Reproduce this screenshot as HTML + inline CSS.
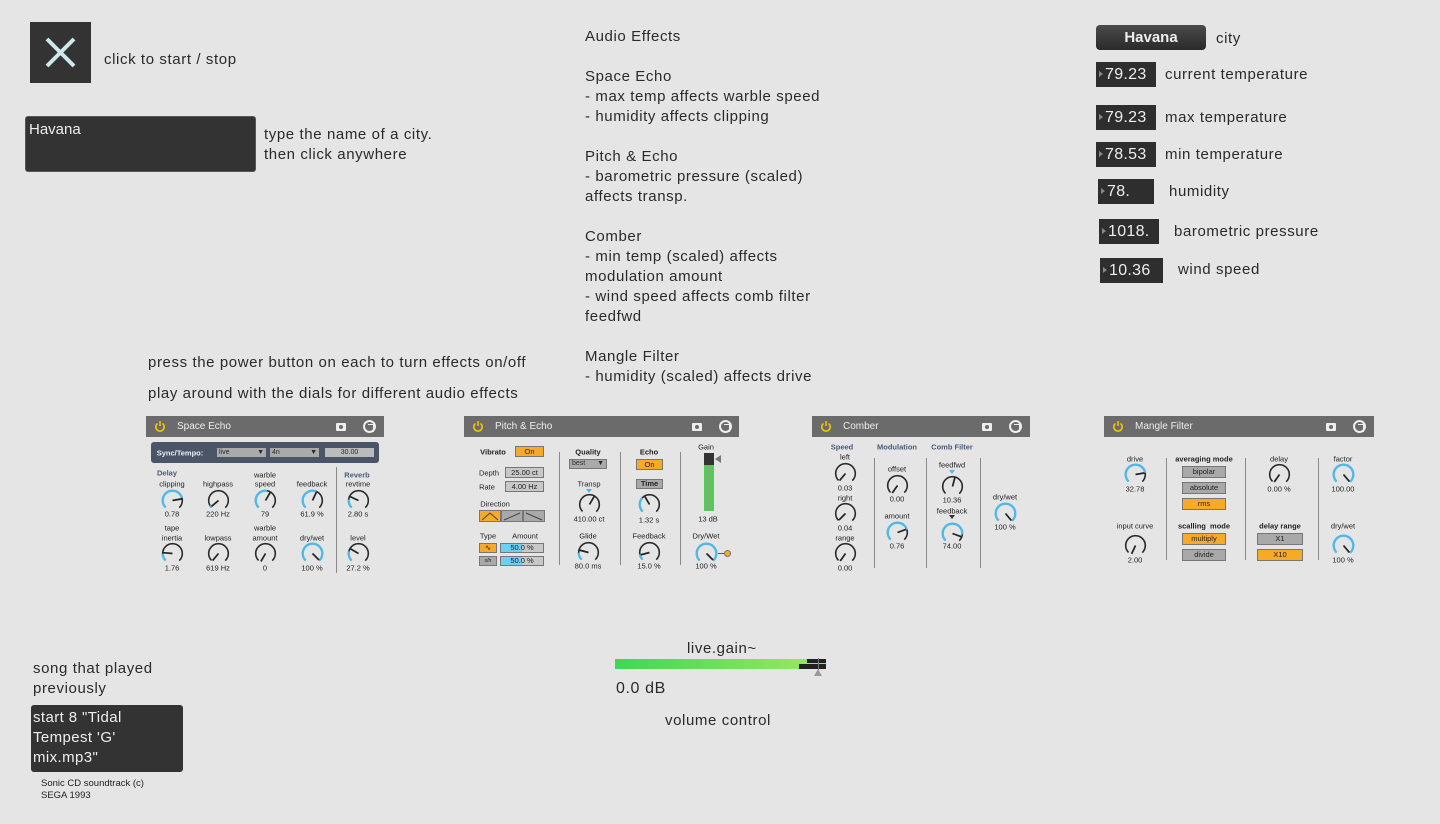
<!DOCTYPE html>
<html><head><meta charset="utf-8"><style>
*{margin:0;padding:0;box-sizing:border-box}
body{width:1440px;height:824px;background:#e5e5e5;position:relative;overflow:hidden;font-family:"Liberation Sans",sans-serif;color:#2a2a2a}
.a{position:absolute;white-space:nowrap}
.t{font-size:15px;line-height:20px;letter-spacing:0.6px}
.c{position:absolute;transform:translate(-50%,-50%);white-space:nowrap;font-size:7.5px;color:#222;line-height:9px}
.h{color:#4a5a7a;font-weight:bold}
.b{font-weight:bold}
.num{position:absolute;background:#2e2e2e;color:#eee;font-size:16px;line-height:25px;height:25px;padding-left:9px;letter-spacing:0.3px}
.num:before{content:"";position:absolute;left:3px;top:9px;border-left:4px solid #888;border-top:3.5px solid transparent;border-bottom:3.5px solid transparent}
.bar{position:absolute;height:21px;background:#6b6b6b;color:#eee;font-size:10px;line-height:21px}
.bar .p{position:absolute;left:8px;top:4px}
.bar .n{position:absolute;left:31px}
.bar .cam{position:absolute;top:7px;width:10px;height:8px;background:#eee;border-radius:1px}
.bar .cam:after{content:"";position:absolute;left:3px;top:2px;width:4px;height:4px;border-radius:50%;background:#6b6b6b}
.bar .cir{position:absolute;top:4px;width:13px;height:13px;border-radius:50%;border:2px solid #eee}
.bar .cir:after{content:"";position:absolute;left:3px;top:2px;width:5px;height:6px;border:1.5px solid #eee;border-left:none}
.k{position:absolute;width:27px;height:27px;margin:-13.5px 0 0 -13.5px;overflow:visible}
.k circle{fill:none;transform:rotate(135deg)}
.k .tr{stroke:#2a2a2a;stroke-width:1.3;stroke-dasharray:37.7 99}
.k .bl{stroke:#4fb8e8;stroke-width:1.9}
.k line{stroke:#222;stroke-width:1.4}
.btn{position:absolute;font-size:7.5px;text-align:center;border:1px solid #777;color:#222}
.o{background:#f7a928}
.g{background:#a9a9a9}
.dv{position:absolute;width:1px;background:#8a8a8a}
</style></head><body>

<div class="a" style="left:30px;top:22px;width:61px;height:61px;background:#333">
<svg width="61" height="61"><path d="M17 17L44 44M44 17L17 44" stroke="#cde8ea" stroke-width="4"/></svg></div>
<div class="a t" style="left:104px;top:50px">click to start / stop</div>
<div class="a" style="left:25px;top:116px;width:231px;height:56px;background:#333;border-radius:3px;border:1px solid #555;color:#eee;font-size:15px;padding:4px 3px">Havana</div>
<div class="a t" style="left:264px;top:125px">type the name of a city.<br>then click anywhere</div>

<div class="a t" style="left:585px;top:27px">Audio Effects<br><br>Space Echo<br>- max temp affects warble speed<br>- humidity affects clipping<br><br>Pitch &amp; Echo<br>- barometric pressure (scaled)<br>affects transp.<br><br>Comber<br>- min temp (scaled) affects<br>modulation amount<br>- wind speed affects comb filter<br>feedfwd<br><br>Mangle Filter<br>- humidity (scaled) affects drive</div>

<div class="a t" style="left:148px;top:353px">press the power button on each to turn effects on/off</div>
<div class="a t" style="left:148px;top:384px">play around with the dials for different audio effects</div>

<div class="a" style="left:1096px;top:25px;width:110px;height:25px;border-radius:4px;background:linear-gradient(#4a4a4a,#2a2a2a);color:#eee;font-weight:bold;font-size:15px;text-align:center;line-height:25px">Havana</div>
<div class="a t" style="left:1216px;top:29px">city</div>
<div class="num" style="left:1096px;top:62px;width:60px">79.23</div><div class="a t" style="left:1165px;top:65px">current temperature</div>
<div class="num" style="left:1096px;top:105px;width:60px">79.23</div><div class="a t" style="left:1165px;top:108px">max temperature</div>
<div class="num" style="left:1096px;top:142px;width:60px">78.53</div><div class="a t" style="left:1165px;top:145px">min temperature</div>
<div class="num" style="left:1098px;top:179px;width:56px">78.</div><div class="a t" style="left:1169px;top:182px">humidity</div>
<div class="num" style="left:1099px;top:219px;width:60px">1018.</div><div class="a t" style="left:1174px;top:222px">barometric pressure</div>
<div class="num" style="left:1100px;top:258px;width:63px">10.36</div><div class="a t" style="left:1178px;top:260px">wind speed</div>

<!-- bars -->
<div class="bar" style="left:146px;top:416px;width:238px"><svg class="p" width="12" height="12" viewBox="0 0 12 12"><path d="M3.5 3.5A4.2 4.2 0 1 0 8.5 3.5M6 1v5" fill="none" stroke="#f2c400" stroke-width="1.6"/></svg><span class="n">Space Echo</span><div class="cam" style="left:190px"></div><div class="cir" style="left:217px"></div></div>
<div class="bar" style="left:464px;top:416px;width:275px"><svg class="p" width="12" height="12" viewBox="0 0 12 12"><path d="M3.5 3.5A4.2 4.2 0 1 0 8.5 3.5M6 1v5" fill="none" stroke="#f2c400" stroke-width="1.6"/></svg><span class="n">Pitch &amp; Echo</span><div class="cam" style="left:228px"></div><div class="cir" style="left:255px"></div></div>
<div class="bar" style="left:812px;top:416px;width:218px"><svg class="p" width="12" height="12" viewBox="0 0 12 12"><path d="M3.5 3.5A4.2 4.2 0 1 0 8.5 3.5M6 1v5" fill="none" stroke="#f2c400" stroke-width="1.6"/></svg><span class="n">Comber</span><div class="cam" style="left:170px"></div><div class="cir" style="left:197px"></div></div>
<div class="bar" style="left:1104px;top:416px;width:270px"><svg class="p" width="12" height="12" viewBox="0 0 12 12"><path d="M3.5 3.5A4.2 4.2 0 1 0 8.5 3.5M6 1v5" fill="none" stroke="#f2c400" stroke-width="1.6"/></svg><span class="n">Mangle Filter</span><div class="cam" style="left:222px"></div><div class="cir" style="left:249px"></div></div>

<!-- Space Echo -->
<div class="a" style="left:151px;top:442px;width:228px;height:21px;background:#4b5568;border-radius:3px"></div>
<div class="c b" style="left:180px;top:453px;color:#eee">Sync/Tempo:</div>
<div class="a" style="left:217px;top:448px;width:49px;height:9px;background:#aaa;font-size:7px;line-height:9px;padding-left:2px">live<span style="position:absolute;right:2px">▼</span></div>
<div class="a" style="left:270px;top:448px;width:49px;height:9px;background:#aaa;font-size:7px;line-height:9px;padding-left:2px">4n<span style="position:absolute;right:2px">▼</span></div>
<div class="a" style="left:325px;top:448px;width:49px;height:9px;background:#bbb;font-size:7px;line-height:9px;text-align:center">30.00</div>
<div class="c h" style="left:167px;top:473px">Delay</div>
<div class="c" style="left:172px;top:484px">clipping</div>
<div class="c" style="left:218px;top:484px">highpass</div>
<div class="c" style="left:265px;top:475px">warble</div><div class="c" style="left:265px;top:484px">speed</div>
<div class="c" style="left:312px;top:484px">feedback</div>
<div class="c h" style="left:357px;top:475px">Reverb</div><div class="c" style="left:358px;top:484px">revtime</div>
<svg class="k" style="left:172px;top:500px" viewBox="-11 -11 22 22"><circle r="8" class="tr"/><circle r="8" class="bl" stroke-dasharray="29 99"/><line x2="7.5" transform="rotate(350)"/></svg>
<svg class="k" style="left:218px;top:500px" viewBox="-11 -11 22 22"><circle r="8" class="tr"/><circle r="8" class="bl" stroke-dasharray="2 99"/><line x2="7.5" transform="rotate(140)"/></svg>
<svg class="k" style="left:265px;top:500px" viewBox="-11 -11 22 22"><circle r="8" class="tr"/><circle r="8" class="bl" stroke-dasharray="20 99"/><line x2="7.5" transform="rotate(300)"/></svg>
<svg class="k" style="left:312px;top:500px" viewBox="-11 -11 22 22"><circle r="8" class="tr"/><circle r="8" class="bl" stroke-dasharray="22 99"/><line x2="7.5" transform="rotate(295)"/></svg>
<svg class="k" style="left:358px;top:500px" viewBox="-11 -11 22 22"><circle r="8" class="tr"/><circle r="8" class="bl" stroke-dasharray="7 99"/><line x2="7.5" transform="rotate(205)"/></svg>
<div class="c" style="left:172px;top:514px">0.78</div><div class="c" style="left:218px;top:514px">220 Hz</div><div class="c" style="left:265px;top:514px">79</div><div class="c" style="left:312px;top:514px">61.9 %</div><div class="c" style="left:358px;top:514px">2.80 s</div>
<div class="c" style="left:172px;top:528px">tape</div><div class="c" style="left:172px;top:538px">inertia</div>
<div class="c" style="left:218px;top:538px">lowpass</div>
<div class="c" style="left:265px;top:528px">warble</div><div class="c" style="left:265px;top:538px">amount</div>
<div class="c" style="left:312px;top:538px">dry/wet</div>
<div class="c" style="left:358px;top:538px">level</div>
<svg class="k" style="left:172px;top:553px" viewBox="-11 -11 22 22"><circle r="8" class="tr"/><circle r="8" class="bl" stroke-dasharray="6 99"/><line x2="7.5" transform="rotate(185)"/></svg>
<svg class="k" style="left:218px;top:553px" viewBox="-11 -11 22 22"><circle r="8" class="tr"/><line x2="7.5" transform="rotate(130)"/></svg>
<svg class="k" style="left:265px;top:553px" viewBox="-11 -11 22 22"><circle r="8" class="tr"/><line x2="7.5" transform="rotate(120)"/></svg>
<svg class="k" style="left:312px;top:553px" viewBox="-11 -11 22 22"><circle r="8" class="tr"/><circle r="8" class="bl" stroke-dasharray="37.7 99"/><line x2="7.5" transform="rotate(45)"/></svg>
<svg class="k" style="left:358px;top:553px" viewBox="-11 -11 22 22"><circle r="8" class="tr"/><circle r="8" class="bl" stroke-dasharray="8 99"/><line x2="7.5" transform="rotate(210)"/></svg>
<div class="c" style="left:172px;top:568px">1.76</div><div class="c" style="left:218px;top:568px">619 Hz</div><div class="c" style="left:265px;top:568px">0</div><div class="c" style="left:312px;top:568px">100 %</div><div class="c" style="left:358px;top:568px">27.2 %</div>
<div class="dv" style="left:336px;top:467px;height:106px"></div>

<!-- Pitch & Echo -->
<div class="c b" style="left:493px;top:452px">Vibrato</div>
<div class="btn o" style="left:515px;top:446px;width:29px;height:11px;line-height:9px">On</div>
<div class="c" style="left:489px;top:473px">Depth</div><div class="btn g" style="left:505px;top:467px;width:39px;height:11px;line-height:9px;background:#c8c8c8">25.00 ct</div>
<div class="c" style="left:487px;top:487px">Rate</div><div class="btn g" style="left:505px;top:481px;width:39px;height:11px;line-height:9px;background:#c8c8c8">4.00 Hz</div>
<div class="c" style="left:495px;top:504px">Direction</div>
<div class="btn o" style="left:479px;top:510px;width:22px;height:12px"><svg width="20" height="10"><path d="M2 9L10 2L18 9" fill="none" stroke="#444"/></svg></div>
<div class="btn g" style="left:501px;top:510px;width:22px;height:12px"><svg width="20" height="10"><path d="M2 9L18 2" fill="none" stroke="#444"/></svg></div>
<div class="btn g" style="left:523px;top:510px;width:22px;height:12px"><svg width="20" height="10"><path d="M2 2L18 9" fill="none" stroke="#444"/></svg></div>
<div class="c" style="left:488px;top:536px">Type</div><div class="c" style="left:525px;top:536px">Amount</div>
<div class="btn o" style="left:479px;top:543px;width:18px;height:10px;line-height:8px">∿</div>
<div class="btn g" style="left:479px;top:556px;width:18px;height:10px;line-height:8px;font-size:5px">s/h</div>
<div class="btn" style="left:500px;top:543px;width:44px;height:10px;line-height:8px;background:linear-gradient(90deg,#6cd0f5 50%,#c8c8c8 50%)">50.0 %</div>
<div class="btn" style="left:500px;top:556px;width:44px;height:10px;line-height:8px;background:linear-gradient(90deg,#6cd0f5 50%,#c8c8c8 50%)">50.0 %</div>
<div class="dv" style="left:559px;top:452px;height:113px"></div>
<div class="c b" style="left:588px;top:452px">Quality</div>
<div class="a" style="left:569px;top:459px;width:38px;height:10px;background:#aaa;border:1px solid #777;font-size:7px;line-height:8px;padding-left:2px">best<span style="position:absolute;right:2px">▼</span></div>
<div class="c" style="left:589px;top:484px">Transp</div>
<div class="a" style="left:586px;top:489px;border-top:4px solid #4fb8e8;border-left:3px solid transparent;border-right:3px solid transparent"></div>
<svg class="k" style="left:589px;top:504px" viewBox="-11 -11 22 22"><circle r="8" class="tr"/><line x2="7.5" transform="rotate(300)"/></svg>
<div class="c" style="left:589px;top:519px">410.00 ct</div>
<div class="c" style="left:588px;top:536px">Glide</div>
<svg class="k" style="left:588px;top:552px" viewBox="-11 -11 22 22"><circle r="8" class="tr"/><circle r="8" class="bl" stroke-dasharray="6 99"/><line x2="7.5" transform="rotate(195)"/></svg>
<div class="c" style="left:588px;top:566px">80.0 ms</div>
<div class="dv" style="left:620px;top:452px;height:113px"></div>
<div class="c b" style="left:649px;top:452px">Echo</div>
<div class="btn o" style="left:636px;top:459px;width:27px;height:11px;line-height:9px">On</div>
<div class="btn g" style="left:636px;top:479px;width:27px;height:10px;line-height:8px;font-weight:bold">Time</div>
<svg class="k" style="left:649px;top:504px" viewBox="-11 -11 22 22"><circle r="8" class="tr"/><circle r="8" class="bl" stroke-dasharray="12 99"/><line x2="7.5" transform="rotate(240)"/></svg>
<div class="c" style="left:649px;top:520px">1.32 s</div>
<div class="c" style="left:649px;top:536px">Feedback</div>
<svg class="k" style="left:649px;top:552px" viewBox="-11 -11 22 22"><circle r="8" class="tr"/><circle r="8" class="bl" stroke-dasharray="5 99"/><line x2="7.5" transform="rotate(165)"/></svg>
<div class="c" style="left:649px;top:566px">15.0 %</div>
<div class="dv" style="left:680px;top:452px;height:113px"></div>
<div class="c" style="left:706px;top:447px">Gain</div>
<div class="a" style="left:704px;top:453px;width:10px;height:58px;background:linear-gradient(90deg,#58c858 45%,#999 45%,#999 55%,#58c858 55%)"></div>
<div class="a" style="left:704px;top:453px;width:10px;height:12px;background:#333"></div>
<div class="a" style="left:715px;top:455px;border-right:6px solid #777;border-top:4px solid transparent;border-bottom:4px solid transparent"></div>
<div class="c" style="left:708px;top:519px">13 dB</div>
<div class="c" style="left:706px;top:536px">Dry/Wet</div>
<svg class="k" style="left:706px;top:553px" viewBox="-11 -11 22 22"><circle r="8" class="tr"/><circle r="8" class="bl" stroke-dasharray="37.7 99"/><line x2="7.5" transform="rotate(45)"/></svg>
<div class="a" style="left:718px;top:553px;width:7px;height:1px;background:#555"></div>
<div class="a" style="left:724px;top:550px;width:7px;height:7px;border-radius:50%;background:#f7a928;border:1px solid #777"></div>
<div class="c" style="left:706px;top:566px">100 %</div>

<!-- Comber -->
<div class="c h" style="left:842px;top:447px">Speed</div>
<div class="c" style="left:845px;top:457px">left</div>
<svg class="k" style="left:845px;top:473px" viewBox="-11 -11 22 22"><circle r="8" class="tr"/><line x2="7.5" transform="rotate(130)"/></svg>
<div class="c" style="left:845px;top:488px">0.03</div>
<div class="c" style="left:845px;top:498px">right</div>
<svg class="k" style="left:845px;top:513px" viewBox="-11 -11 22 22"><circle r="8" class="tr"/><line x2="7.5" transform="rotate(135)"/></svg>
<div class="c" style="left:845px;top:528px">0.04</div>
<div class="c" style="left:845px;top:538px">range</div>
<svg class="k" style="left:845px;top:553px" viewBox="-11 -11 22 22"><circle r="8" class="tr"/><line x2="7.5" transform="rotate(125)"/></svg>
<div class="c" style="left:845px;top:568px">0.00</div>
<div class="dv" style="left:874px;top:458px;height:110px"></div>
<div class="c h" style="left:897px;top:447px">Modulation</div>
<div class="c" style="left:897px;top:469px">offset</div>
<svg class="k" style="left:897px;top:485px" viewBox="-11 -11 22 22"><circle r="8" class="tr"/><line x2="7.5" transform="rotate(125)"/></svg>
<div class="c" style="left:897px;top:499px">0.00</div>
<div class="c" style="left:897px;top:516px">amount</div>
<svg class="k" style="left:897px;top:532px" viewBox="-11 -11 22 22"><circle r="8" class="tr"/><circle r="8" class="bl" stroke-dasharray="29 99"/><line x2="7.5" transform="rotate(340)"/></svg>
<div class="c" style="left:897px;top:546px">0.76</div>
<div class="dv" style="left:926px;top:458px;height:110px"></div>
<div class="c h" style="left:952px;top:447px">Comb Filter</div>
<div class="c" style="left:952px;top:465px">feedfwd</div>
<div class="a" style="left:949px;top:470px;border-top:4px solid #4fb8e8;border-left:3px solid transparent;border-right:3px solid transparent"></div>
<svg class="k" style="left:952px;top:486px" viewBox="-11 -11 22 22"><circle r="8" class="tr"/><line x2="7.5" transform="rotate(285)"/></svg>
<div class="c" style="left:952px;top:500px">10.36</div>
<div class="c" style="left:952px;top:511px">feedback</div>
<div class="a" style="left:949px;top:515px;border-top:4px solid #333;border-left:3px solid transparent;border-right:3px solid transparent"></div>
<svg class="k" style="left:952px;top:533px" viewBox="-11 -11 22 22"><circle r="8" class="tr"/><circle r="8" class="bl" stroke-dasharray="32 99"/><line x2="7.5" transform="rotate(20)"/></svg>
<div class="c" style="left:952px;top:546px">74.00</div>
<div class="dv" style="left:980px;top:458px;height:110px"></div>
<div class="c" style="left:1005px;top:497px">dry/wet</div>
<svg class="k" style="left:1005px;top:513px" viewBox="-11 -11 22 22"><circle r="8" class="tr"/><circle r="8" class="bl" stroke-dasharray="37.7 99"/><line x2="7.5" transform="rotate(50)"/></svg>
<div class="c" style="left:1005px;top:527px">100 %</div>

<!-- Mangle -->
<div class="c" style="left:1135px;top:459px">drive</div>
<svg class="k" style="left:1135px;top:474px" viewBox="-11 -11 22 22"><circle r="8" class="tr"/><circle r="8" class="bl" stroke-dasharray="30 99"/><line x2="7.5" transform="rotate(350)"/></svg>
<div class="c" style="left:1135px;top:489px">32.78</div>
<div class="c" style="left:1135px;top:526px">input curve</div>
<svg class="k" style="left:1135px;top:545px" viewBox="-11 -11 22 22"><circle r="8" class="tr"/><line x2="7.5" transform="rotate(115)"/></svg>
<div class="c" style="left:1135px;top:560px">2.00</div>
<div class="dv" style="left:1166px;top:458px;height:102px"></div>
<div class="c b" style="left:1204px;top:459px">averaging mode</div>
<div class="btn g" style="left:1182px;top:466px;width:44px;height:12px;line-height:10px">bipolar</div>
<div class="btn g" style="left:1182px;top:482px;width:44px;height:12px;line-height:10px">absolute</div>
<div class="btn o" style="left:1182px;top:498px;width:44px;height:12px;line-height:10px">rms</div>
<div class="c b" style="left:1204px;top:526px">scalling &nbsp;mode</div>
<div class="btn o" style="left:1182px;top:533px;width:44px;height:12px;line-height:10px">multiply</div>
<div class="btn g" style="left:1182px;top:549px;width:44px;height:12px;line-height:10px">divide</div>
<div class="dv" style="left:1245px;top:458px;height:102px"></div>
<div class="c" style="left:1279px;top:459px">delay</div>
<svg class="k" style="left:1279px;top:474px" viewBox="-11 -11 22 22"><circle r="8" class="tr"/><line x2="7.5" transform="rotate(125)"/></svg>
<div class="c" style="left:1279px;top:489px">0.00 %</div>
<div class="c b" style="left:1280px;top:526px">delay range</div>
<div class="btn g" style="left:1257px;top:533px;width:46px;height:12px;line-height:10px">X1</div>
<div class="btn o" style="left:1257px;top:549px;width:46px;height:12px;line-height:10px">X10</div>
<div class="dv" style="left:1318px;top:458px;height:102px"></div>
<div class="c" style="left:1343px;top:459px">factor</div>
<svg class="k" style="left:1343px;top:474px" viewBox="-11 -11 22 22"><circle r="8" class="tr"/><circle r="8" class="bl" stroke-dasharray="37.7 99"/><line x2="7.5" transform="rotate(50)"/></svg>
<div class="c" style="left:1343px;top:489px">100.00</div>
<div class="c" style="left:1343px;top:526px">dry/wet</div>
<svg class="k" style="left:1343px;top:545px" viewBox="-11 -11 22 22"><circle r="8" class="tr"/><circle r="8" class="bl" stroke-dasharray="37.7 99"/><line x2="7.5" transform="rotate(50)"/></svg>
<div class="c" style="left:1343px;top:560px">100 %</div>

<!-- bottom -->
<div class="a t" style="left:33px;top:659px">song that played<br>previously</div>
<div class="a" style="left:31px;top:705px;width:152px;height:67px;background:#333;border-radius:3px;color:#eee;font-size:15px;line-height:20px;padding:3px 2px;letter-spacing:0.4px">start 8 "Tidal<br>Tempest 'G'<br>mix.mp3"</div>
<div class="a" style="left:41px;top:778px;font-size:9.5px;line-height:12px;color:#222">Sonic CD soundtrack (c)<br>SEGA 1993</div>

<div class="a t" style="left:687px;top:639px">live.gain~</div>
<div class="a" style="left:615px;top:659px;width:211px;height:10px;background:linear-gradient(90deg,#3ed854,#9fe860)"></div>
<div class="a" style="left:799px;top:664px;width:27px;height:5px;background:#222"></div>
<div class="a" style="left:807px;top:659px;width:19px;height:4px;background:#222"></div>
<div class="a" style="left:818px;top:658px;width:1px;height:12px;background:#777"></div>
<div class="a" style="left:814px;top:669px;border-bottom:7px solid #999;border-left:4px solid transparent;border-right:4px solid transparent"></div>
<div class="a t" style="left:616px;top:679px;font-size:16px">0.0 dB</div>
<div class="a t" style="left:665px;top:711px">volume control</div>
</body></html>
